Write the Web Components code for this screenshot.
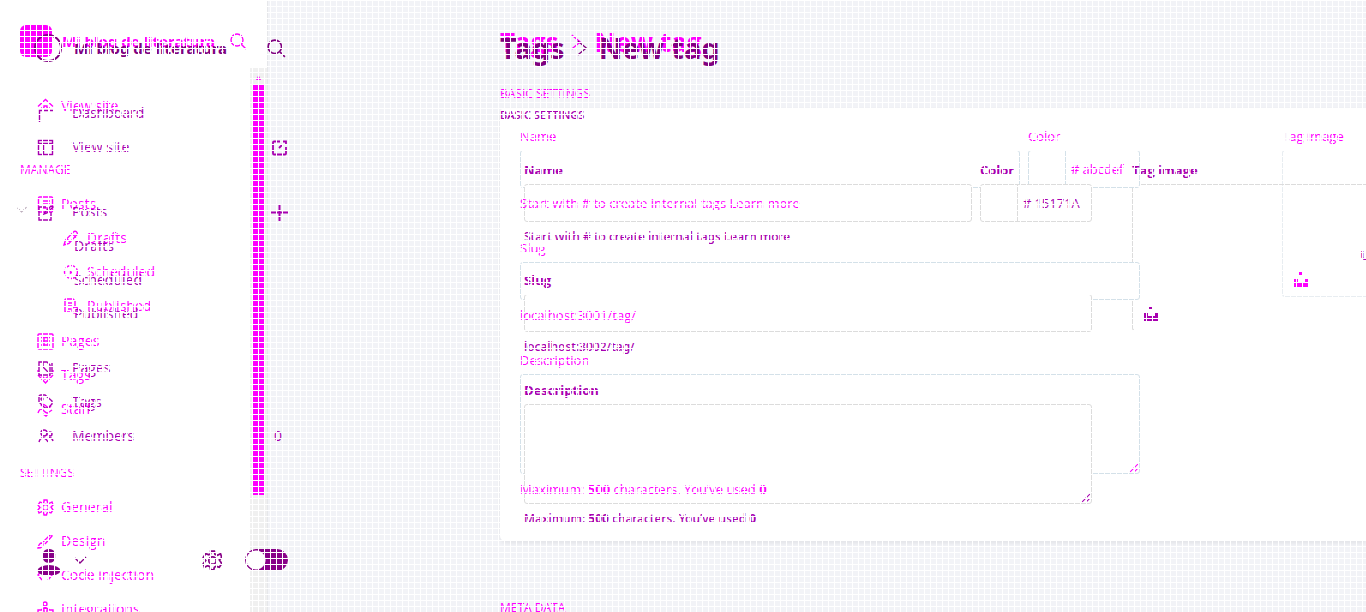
<!DOCTYPE html>
<html lang="en">
<head>
<meta charset="utf-8">
<title>Tags - New tag</title>
<style>
html,body{margin:0;min-height:100%;background:#f2f3f7}
body{font:14px/22px "Open Sans","Noto Sans",sans-serif;overflow:hidden}
</style>
</head>
<body>
<diff-stage></diff-stage>
<script>
const OLD = '#ff00ff', NEW = '#a800b0';

const icons = {
  search: '<circle cx="7" cy="7" r="6"/><path d="M11.500 11.500L16 16"/>',
  home: '<path d="M1 8.500L8.500 1.500L16 8.500M4 10h3v-2h3v2h3"/>',
  panel: '<path d="M2.500 17V5.500H5M7 5.500h4M13 5.500h3"/>',
  page: '<rect x="1.500" y="1" width="14" height="15" rx="1"/><path d="M5 5h8M5 8h8M5 12h8"/>',
  pages: '<rect x="1" y="1" width="15" height="15" rx="1"/><path d="M4 4.500h9M4 8h9M4 12h9M7 4v9M11 4v9"/>',
  pencil: '<path d="M1 15l1.500-5L11 1.500q2-1 3 1t-1 3L6 13.500zM9 3.500l4 4M4 9l3 3"/>',
  clock: '<circle cx="8" cy="8" r="6.500" stroke-dasharray="4 2"/><path d="M7.500 6v3l2-1"/>',
  publish: '<path d="M2 14V2q0-1 1-1h7l2 2v5M2 14h5M5 5h5M5 8h4M5 11h3"/><circle cx="12" cy="12" r="3"/>',
  tag: '<path d="M2 8V3q0-2 2-2h4l7 6v3l-4 4H8L2 8z"/><circle cx="5" cy="5" r="1"/>',
  tagdown: '<path d="M1 8l7.500 8L16 8M1 6V3M16 6V3M4 8l4 4 5-4"/>',
  staff: '<path d="M1 12q2-6 5-3t4 3 5-3M4 5q2-3 5 0t5 0M6 13l3 2 2-2"/>',
  members: '<circle cx="7" cy="5" r="3"/><circle cx="13" cy="6" r="2"/><path d="M2 14q1-4 4-4t5 4M11 10q4-1 5 3"/>',
  gear: '<circle cx="8.500" cy="8.500" r="3"/><path d="M7 1h3l.500 2.500 2 .800L15 3l1 3-2 2 2 3-2 3-2.500-.800-1.500.800-.500 2H7l-.500-2.500-2-.800L2 14l-1-3 2-2.500L1 6l2-3 2.500.800L7 3z"/>',
  design: '<path d="M1 15q1-5 4-5l1 1q0 4-5 4zM6 9l7-7q2-1 2 1L8 11"/>',
  code: '<path d="M5 3L1 8l4 5M11 3l4 5-4 5"/>',
  blocks: '<circle cx="8" cy="3" r="2"/><path d="M8 5v3M1 9h6v7H1zM10 9h6v7h-6zM4 9l4-3 5 3"/>',
  layout: '<rect x="1.500" y="1.500" width="14" height="14"/><path d="M2 4.500h13M6.500 5v10"/>',
  edit: '<path d="M9 3H2v13h12V8M7 10l1-2 6-6 2 1-6 6z"/>',
  copies: '<path d="M2 2h8l3 3v10H2zM6 2v5l6 6M15 3v11"/>',
  external: '<path d="M9 2.500H3q-1 0-1 1v11q0 1 1 1h11q1 0 1-1V8M8 9l4-4M12 2.500h3v3" stroke-width="1.800"/>',
  plus: '<path stroke-width="2" d="M8.500 0v17M0 8.500h17"/>',
  down: '<path d="M3 6l5 5 6-6"/>',
  right: '<path d="M4 1l9 7.500L4 16"/>',
  user: '<g fill="currentColor" stroke="none"><rect x="4.500" y="0" width="8" height="9" rx="3.500"/><ellipse cx="8.500" cy="14" rx="7.500" ry="3.500"/></g>',
  upload: '<g fill="currentColor" stroke="none"><path d="M6 1h4v3H6zM1 8h4v3h7V8h4v8H1z"/></g>',
  grip: '<path stroke-width="1.800" d="M2 15L15 2M9 15l6-6"/>'
};

function define(name, css, html) {
  customElements.define(name, class extends HTMLElement {
    connectedCallback() {
      if (this.shadowRoot) return;
      const root = this.attachShadow({mode: 'open'});
      const t = document.createElement('template');
      t.innerHTML = '<style>*{box-sizing:border-box}' + css + '</style>' + (typeof html === 'function' ? html(this) : html);
      root.append(t.content.cloneNode(true));
    }
  });
}

define('ui-icon', ':host{display:block;width:17px;height:17px;flex:none}svg{display:block;width:100%;height:100%;fill:none;stroke:currentColor;stroke-width:1.400}',
  el => `<svg viewBox="0 0 17 17" aria-hidden="true">${icons[el.getAttribute('name')]}</svg>`);

define('nav-row', `
:host{display:block}
a{display:flex;align-items:center;height:34px;color:inherit;text-decoration:none;padding-left:var(--indent,37px);gap:var(--gap,7px);white-space:nowrap}
.end{display:block;margin-left:auto}`,
  el => `<a href="#">${el.getAttribute('icon') ? `<ui-icon name="${el.getAttribute('icon')}"></ui-icon>` : ''}<span><slot></slot></span><span class="end"><slot name="end"></slot></span></a>`);

define('nav-heading', ':host{display:block;height:34px;line-height:34px;font-size:12px;padding-left:20px;margin-top:30px}', '<slot></slot>');

define('side-old', `
:host{display:block;width:267px;color:${OLD};position:relative;z-index:2;--gap:7px}
header{display:flex;gap:10px;height:32px;margin-top:25px;margin-bottom:32px;padding:0 20px;align-items:center;white-space:nowrap}
header i{width:32px;height:32px;border-radius:6px;background:currentColor;flex:none}
header ui-icon{margin-left:auto}
header b{font:700 15px/22px "Noto Sans",sans-serif}
.sub{--indent:63px;margin-bottom:1px}`,
`<header><i></i><b>Mi blog de literatura</b><ui-icon name="search"></ui-icon></header>
<nav><nav-row icon="home">View site</nav-row>
<nav-heading>MANAGE</nav-heading>
<nav-row icon="page">Posts</nav-row>
<div class="sub"><nav-row icon="pencil">Drafts</nav-row><nav-row icon="clock">Scheduled</nav-row><nav-row icon="publish">Published</nav-row></div>
<nav-row icon="pages">Pages</nav-row><nav-row icon="tagdown">Tags</nav-row><nav-row icon="staff">Staff</nav-row>
<nav-heading>SETTINGS</nav-heading>
<nav-row icon="gear">General</nav-row><nav-row icon="design">Design</nav-row><nav-row icon="code">Code injection</nav-row><nav-row icon="blocks">Integrations</nav-row></nav>`);

define('side-new', `
:host{display:flex;flex-direction:column;width:288px;height:100vh;color:${NEW};position:relative;z-index:3;--gap:18px;font-weight:500}
header{display:flex;align-items:center;gap:12px;height:28px;margin-top:34px;margin-bottom:34px;padding-left:34px;color:#800080;white-space:nowrap}
header i{width:28px;height:28px;border:2px solid;border-radius:50%;flex:none}
header b{font:700 15px/22px "Noto Sans",sans-serif}
header ui-icon{margin-left:auto;margin-right:2px;width:19px;height:19px}
.posts{margin-top:31px;display:grid;grid-template-columns:16px 1fr}
.posts>ui-icon{width:14px;height:14px;margin:8px 0 0 15px;color:#b8a8b8;grid-area:1/1}
.posts>nav-row{grid-area:1/1/2/3}
.sub{--indent:74px;margin-bottom:20px}
footer{display:flex;align-items:center;height:30px;margin-top:auto;margin-bottom:37px;padding-left:36px;color:#880088}
.user{width:26px;height:26px;align-self:flex-end}.down{margin-left:10px}.gear{margin-left:auto;width:21px;height:21px}
label{margin-left:22px;width:43px;height:22px}
input{appearance:none;display:block;margin:0;width:43px;height:22px;border-radius:11px;border:1px solid;background:radial-gradient(circle at 10px 10px,#fff 0 9px,currentColor 10px);color:inherit}
.count{padding-right:6px}`,
`<header><i></i><b>Mi blog de literatura</b><ui-icon name="search"></ui-icon></header>
<nav><nav-row icon="panel">Dashboard</nav-row>
<nav-row icon="layout">View site<ui-icon slot="end" name="external"></ui-icon></nav-row>
<div class="posts"><ui-icon name="down"></ui-icon><nav-row icon="edit">Posts<ui-icon slot="end" name="plus"></ui-icon></nav-row></div>
<div class="sub"><nav-row>Drafts</nav-row><nav-row>Scheduled</nav-row><nav-row>Published</nav-row></div>
<nav-row icon="copies">Pages</nav-row><nav-row icon="tag">Tags</nav-row><nav-row icon="members">Members<span slot="end" class="count">0</span></nav-row></nav>
<footer><ui-icon class="user" name="user"></ui-icon><ui-icon class="down" name="down"></ui-icon><ui-icon class="gear" name="gear"></ui-icon><label><input type="checkbox" aria-label="Night mode"></label></footer>`);

define('side-track', `
:host{display:flex;justify-content:flex-end;width:268px;background:#fff;border-right:1px solid #e6e7ea}
div{width:17px;margin-top:68px;background:#f0f0f0;display:flex;flex-direction:column;align-items:center;color:${OLD};font-size:10px;line-height:17px}
i{width:11px;height:410px;background:currentColor}
span:last-child{margin-top:auto;padding-bottom:3px}`,
'<div><span>▴</span><i></i><span>▾</span></div>');

define('page-title', `
:host{display:block}
h1{margin:0;display:flex;align-items:center;font:var(--title);white-space:nowrap}
ui-icon{width:16px;height:26px;margin:0 var(--gap)}`,
'<h1><span>Tags</span><ui-icon name="right"></ui-icon><span>New tag</span></h1>');

define('form-field', `
:host{display:block;min-width:0}
label,p{display:block;margin:0;position:relative;z-index:var(--text-z);white-space:nowrap}
label{font-weight:var(--label-weight);margin-bottom:3px}
p{margin-top:4px;font:var(--help)}
.box{display:flex;position:relative;z-index:var(--box-z);height:38px;border:1px solid var(--line);border-radius:3px;background:#fff;overflow:hidden}
.box.tall{height:100px}
input,textarea{flex:1;min-width:0;border:0;outline:0;background:none;resize:none;font:inherit;font-size:13px;color:inherit;padding:0 3px}
.swatch{width:37px;border-right:1px solid var(--line)}
.hash{line-height:36px;padding-left:5px;font-size:13px}
ui-icon{width:10px;height:10px;align-self:flex-end}`,
el => {
  const kind = el.getAttribute('kind');
  const control = kind === 'area' ? '<textarea id="f"></textarea><ui-icon name="grip"></ui-icon>'
    : kind === 'color' ? `<span class="swatch"></span><span class="hash">#</span><input id="f" value="${el.getAttribute('value')}">`
    : '<input id="f">';
  return `<label for="f">${el.getAttribute('label')}</label><div class="box ${kind === 'area' ? 'tall' : ''}">${control}</div>${el.hasAttribute('help') ? '<p><slot></slot></p>' : ''}`;
});

define('image-field', `
:host{display:block;min-width:0;white-space:nowrap}
div.label{font-weight:var(--label-weight);margin-bottom:3px;position:relative;z-index:var(--text-z)}
button{all:unset;box-sizing:border-box;display:flex;flex-direction:column;justify-content:flex-end;width:100%;height:147px;padding:0 10px 8px;border:1px solid var(--image-line,var(--line));border-right:0;border-radius:3px 0 0 3px}
ui-icon{width:17px;height:17px}
.text{align-self:flex-end;margin-bottom:39px;height:22px;margin-right:-14px;font-weight:700}
em{font-style:normal;color:var(--first,inherit)}`,
`<div class="label"><em>T</em>ag image</div><button aria-label="Upload tag image"><span class="text"><slot></slot></span><ui-icon name="upload"></ui-icon></button>`);

const form = port => `
<div class="top"><form-field label="Name"></form-field><form-field kind="color" label="Color" value="${port === 3001 ? 'abcdef' : '15171A'}"></form-field>
<p>Start with # to create internal tags <a href="#">Learn more</a></p></div>
<form-field label="Slug" help>localhost:${port}/tag/</form-field>
<form-field kind="area" label="Description" help>Maximum: <b>500</b> characters. You’ve used <b>0</b></form-field>`;

const formCss = `
.form{display:grid;align-items:start}
.fields{display:flex;flex-direction:column;gap:var(--row)}
.top{display:grid;grid-template-columns:1fr 112px;column-gap:8px}
.top p{grid-column:1/3;margin:4px 0 0;font:var(--help);position:relative;z-index:var(--text-z);white-space:nowrap}
a{color:inherit;text-decoration:none}h2{margin:0;font-size:12px;line-height:22px}b{font-weight:700}`;

define('main-old', `
:host{display:block;min-width:0;color:${OLD};--title:700 26px/40px "Open Sans",sans-serif;--gap:10px;--row:23px;--text-z:2;--box-z:0;--line:#d4e1e9;--image-line:#e8edf1;--label-weight:400;--help:13px/22px "Open Sans",sans-serif;font-size:13px;--first:#f6eef6}
${formCss}
page-title{margin-top:22px;margin-bottom:21px}
h2{font-weight:400;font-size:12px}
.card{background:#fff;border-radius:5px 0 0 5px;box-shadow:0 2px 4px #0001;margin-top:3px;padding:17px 0 41px 20px}
.form{grid-template-columns:620px 1fr;column-gap:142px}
.meta{margin-top:56px}`,
`<page-title></page-title><h2>BASIC SETTINGS</h2><section class="card form"><div class="fields">${form(3001)}</div><image-field></image-field></section><h2 class="meta">META DATA</h2>`);

define('main-new', `
:host{display:block;min-width:0;color:${NEW};--title:700 29px/40px "Noto Sans",sans-serif;--gap:9px;--row:21px;--text-z:3;--box-z:1;--line:#dcdcdc;--label-weight:700;--help:500 12px/22px "Noto Sans",sans-serif;font-size:13px}
${formCss}
page-title{margin-top:28px;margin-bottom:36px;position:relative;z-index:3;color:#800080}
h2{font-weight:600;font-size:11px;position:relative;z-index:3}
.form{grid-template-columns:568px 1fr;column-gap:40px;padding-left:24px;margin-top:33px}`,
`<page-title></page-title><h2>BASIC SETTINGS</h2><section class="form"><div class="fields">${form(3002)}</div><image-field>U</image-field></section>`);

define('diff-stage', `
:host{display:grid;grid-template-columns:500px minmax(0,1fr);height:100vh;overflow:hidden;position:relative;isolation:isolate}
side-old,side-new,side-track{grid-area:1/1}
main-old,main-new{grid-area:1/2}
.mesh{position:absolute;inset:0;z-index:9;pointer-events:none;background:repeating-linear-gradient(90deg,#fff 0 1px,transparent 1px 6px),repeating-linear-gradient(#fff 0 1px,transparent 1px 6px)}`,
'<side-track></side-track><main-old></main-old><main-new></main-new><side-old></side-old><side-new></side-new><div class="mesh"></div>');
</script>
</body>
</html>
